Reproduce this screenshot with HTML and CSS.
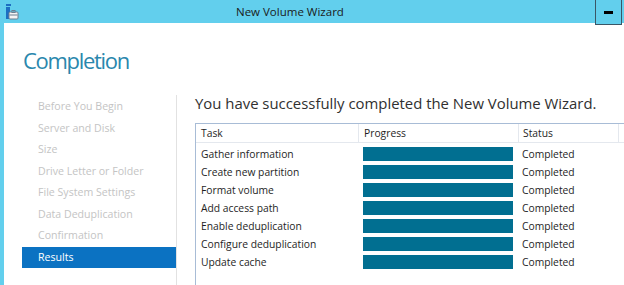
FILE: index.html
```html
<!DOCTYPE html>
<html lang="en">

<head>
    <meta charset="UTF-8">
    <title>New Volume Wizard</title>
    <link rel="stylesheet" href="styles.css">
</head>

<body>
    <div class="window">
        <header class="titlebar">
            <svg class="app-icon" width="14" height="16" viewBox="0 0 14 16">
                <rect x="1" y="0" width="5" height="2" fill="#1c6fc2"/>
                <rect x="1" y="3" width="4" height="12" fill="#1c6fc2"/>
                <rect x="4" y="8" width="9" height="7" rx="1" fill="#f4f4f4" stroke="#6b7f91"/>
                <rect x="7" y="6.5" width="3" height="2" fill="none" stroke="#6b7f91"/>
                <rect x="4.5" y="10.5" width="8" height="1" fill="#6b7f91"/>
            </svg>
            <span class="title">New Volume Wizard</span>
            <button class="min-btn"><span></span></button>
        </header>

        <div class="frame">
            <h1 class="page-title">Completion</h1>
            <div class="body-row">
                <ul class="steps">
                    <li>Before You Begin</li>
                    <li>Server and Disk</li>
                    <li>Size</li>
                    <li>Drive Letter or Folder</li>
                    <li>File System Settings</li>
                    <li>Data Deduplication</li>
                    <li>Confirmation</li>
                    <li class="active">Results</li>
                </ul>

                <main class="content">
                    <p class="lead">You have successfully completed the New Volume Wizard.</p>
                    <div class="list">
                        <div class="row head">
                            <div class="c-task">Task</div>
                            <div class="c-prog">Progress</div>
                            <div class="c-stat">Status</div>
                            <div class="c-rest"></div>
                        </div>
                        <div class="row">
                            <div class="c-task">Gather information</div>
                            <div class="c-prog"><div class="bar"></div></div>
                            <div class="c-stat">Completed</div>
                        </div>
                        <div class="row">
                            <div class="c-task">Create new partition</div>
                            <div class="c-prog"><div class="bar"></div></div>
                            <div class="c-stat">Completed</div>
                        </div>
                        <div class="row">
                            <div class="c-task">Format volume</div>
                            <div class="c-prog"><div class="bar"></div></div>
                            <div class="c-stat">Completed</div>
                        </div>
                        <div class="row">
                            <div class="c-task">Add access path</div>
                            <div class="c-prog"><div class="bar"></div></div>
                            <div class="c-stat">Completed</div>
                        </div>
                        <div class="row">
                            <div class="c-task">Enable deduplication</div>
                            <div class="c-prog"><div class="bar"></div></div>
                            <div class="c-stat">Completed</div>
                        </div>
                        <div class="row">
                            <div class="c-task">Configure deduplication</div>
                            <div class="c-prog"><div class="bar"></div></div>
                            <div class="c-stat">Completed</div>
                        </div>
                        <div class="row">
                            <div class="c-task">Update cache</div>
                            <div class="c-prog"><div class="bar"></div></div>
                            <div class="c-stat">Completed</div>
                        </div>
                    </div>
                </main>
            </div>
        </div>
    </div>
</body>

</html>
```

FILE: styles.css
```css
* {
    box-sizing: border-box;
    margin: 0;
    padding: 0;
}

body {
    width: 624px;
    height: 285px;
    overflow: hidden;
    font-family: 'Open Sans', 'Noto Sans', 'Liberation Sans', sans-serif;
    background-color: #62cfed;
}

.window {
    display: flex;
    flex-direction: column;
    height: 285px;
}

.titlebar {
    display: flex;
    align-items: center;
    height: 23px;
    padding-left: 5px;
    background-color: #62cfed;
}

.app-icon {
    flex: none;
}

.title {
    margin-left: 217px;
    font-size: 11.5px;
    color: #1b1b1b;
}

.min-btn {
    display: flex;
    align-items: center;
    justify-content: center;
    margin-left: auto;
    margin-right: 2px;
    align-self: flex-start;
    width: 27px;
    height: 25px;
    border: 1px solid #3a5666;
    border-top: none;
    background-color: #62cfed;
    position: relative;
    z-index: 1;
}

.min-btn span {
    display: block;
    width: 9px;
    height: 3px;
    background-color: #000;
}

.frame {
    flex: 1;
    margin-left: 4px;
    background-color: #fff;
    overflow: hidden;
}

.page-title {
    padding: 22px 0 0 19px;
    height: 72px;
    font-size: 22px;
    font-weight: 400;
    color: #2a87ad;
    letter-spacing: -1.3px;
}

.body-row {
    display: flex;
}

.steps {
    list-style: none;
    width: 155px;
    margin-left: 18px;
    padding-top: 1px;
    border-right: 1px solid #e2e2e2;
    height: 200px;
}

.steps li {
    height: 21.5px;
    line-height: 21.5px;
    padding-left: 16px;
    font-size: 10.6px;
    color: #c4c4c4;
}

.steps li.active {
    background-color: #0b72c2;
    color: #fff;
}

.content {
    flex: 1;
    padding-left: 18px;
}

.lead {
    height: 28px;
    line-height: 16px;
    font-size: 14.9px;
    color: #303030;
}

.list {
    height: 200px;
    border: 1px solid #a8bcd6;
    border-right: none;
    font-size: 10.3px;
    color: #1e1e1e;
}

.row {
    display: flex;
    height: 18px;
    line-height: 18px;
}

.row.head {
    height: 19px;
    line-height: 19px;
    border-bottom: 1px solid #e4e8ee;
    margin-bottom: 2px;
}

.c-task {
    width: 162px;
    padding-left: 5px;
}

.c-prog {
    width: 160px;
    padding: 2px 5px 0 5px;
}

.c-stat {
    width: 100px;
    padding-left: 4px;
}

.head .c-prog,
.head .c-stat {
    padding-top: 0;
    border-left: 1px solid #e4e8ee;
}

.head .c-rest {
    flex: 1;
    border-left: 1px solid #e4e8ee;
}

.bar {
    height: 14px;
    background-color: #016f91;
}
```
